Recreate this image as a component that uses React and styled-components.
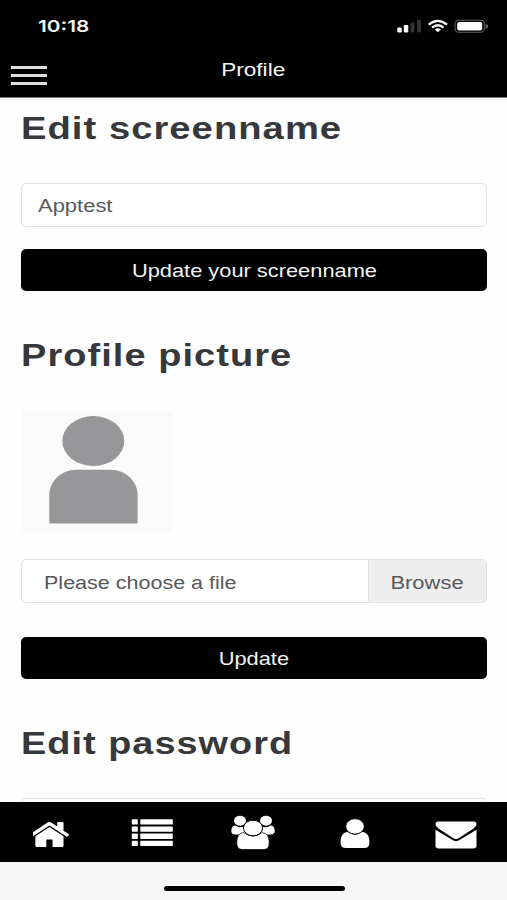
import React from "react";
import styled, { createGlobalStyle } from "styled-components";

const GlobalStyle = createGlobalStyle`
  * {
    box-sizing: border-box;
  }
  body {
    margin: 0;
    background: #fefefe;
    font-family: "Liberation Sans", Arial, sans-serif;
  }
`;

const Screen = styled.div`
  width: 507px;
  height: 900px;
  display: flex;
  flex-direction: column;
  overflow: hidden;
`;

/* wide lettering used all over the app */
const Wide = styled.span`
  display: inline-block;
  white-space: nowrap;
  transform: scaleX(${(props) => props.$x || 1.22});
  transform-origin: ${(props) => props.$origin || "left"} center;
`;

const Header = styled.header`
  height: 98px;
  flex: none;
  background: #000;
  color: #f4f4f4;
  border-bottom: 1px solid #777;
`;

const StatusBar = styled.div`
  height: 52px;
  padding: 0 19px 0 38px;
  display: flex;
  align-items: center;
  justify-content: space-between;
`;

const Time = styled.div`
  font-family: Inter, sans-serif;
  font-size: 16.5px;
  font-weight: 600;
`;

const StatusIcons = styled.svg`
  width: 91px;
  height: 16px;
`;

const TitleBar = styled.div`
  height: 36px;
  padding: 0 11px;
  display: grid;
  grid-template-columns: 36px 1fr 36px;
  align-items: center;
`;

const MenuButton = styled.button`
  height: 19px;
  padding: 0;
  margin-top: 11px;
  border: 0;
  background: none;
  display: flex;
  flex-direction: column;
  justify-content: space-between;
`;

const MenuLine = styled.span`
  width: 36px;
  height: 3px;
  background: #dedede;
`;

const Title = styled.div`
  font-size: 18.5px;
  line-height: 36px;
  text-align: center;
`;

const Content = styled.main`
  flex: 1;
  min-height: 0;
  padding: 10px 20px 0 21px;
  overflow: hidden;
`;

const Heading = styled.h2`
  height: 40px;
  margin: 0 0 35px;
  font-size: 31.3px;
  line-height: 42px;
  font-weight: bold;
  letter-spacing: 0.85px;
  color: #37383b;
`;

const Input = styled.div`
  height: 44px;
  padding-left: 16px;
  border: 1.5px solid #e2e2e2;
  border-radius: 5px;
  background: #fff;
  color: #58595b;
  font-size: 18px;
  line-height: 45px;
`;

const Button = styled.button`
  display: block;
  width: 100%;
  height: 42px;
  margin: ${(props) => props.$top}px 0 44px;
  padding: 0;
  border: 0;
  border-radius: 5px;
  background: #000;
  color: #f2f2f2;
  font-family: inherit;
  font-size: 17.9px;
  line-height: 44px;
`;

const Avatar = styled.svg`
  display: block;
  width: 150px;
  height: 121px;
  margin: 36px 0 27px 1px;
  background: #fafafa;
`;

const FileField = styled.div`
  height: 44px;
  display: flex;
  border: 1.5px solid #e2e2e2;
  border-radius: 5px;
  overflow: hidden;
  background: #fff;
  color: #58595b;
  font-size: 18px;
  line-height: 47px;
`;

const FileName = styled.div`
  flex: 1;
  padding-left: 21.6px;
`;

const Browse = styled.div`
  width: 118px;
  border-left: 1px solid #e2e2e2;
  background: #eee;
  text-align: center;
`;

const TabBar = styled.nav`
  flex: none;
  height: 60px;
  background: #000;
  display: grid;
  grid-template-columns: repeat(5, 1fr);
  align-items: center;
  justify-items: center;
`;

const TabIcon = styled.svg`
  display: block;
  fill: #fff;
  margin-top: ${(props) => props.$top || 0}px;
`;

const HomeArea = styled.footer`
  flex: none;
  height: 38px;
  padding: 24px 0 0 1px;
  background: #f7f7f7;
`;

const HomeIndicator = styled.div`
  width: 181px;
  height: 5px;
  margin: 0 auto;
  border-radius: 3px;
  background: #000;
`;

function Status() {
  return (
    <StatusIcons viewBox="397 18 91 16">
      <rect x="397.3" y="27.5" width="4.5" height="5" rx="1.2" fill="#fff" />
      <rect x="403.8" y="25" width="4.5" height="7.5" rx="1.2" fill="#fff" />
      <rect x="410.5" y="22.5" width="4" height="10" rx="1" fill="#333" />
      <rect x="417" y="20" width="4" height="12.5" rx="1" fill="#333" />
      <g fill="none" stroke="#fff" strokeWidth="2.2">
        <path d="M428.7 24.6Q437.8 17 447 24.6" />
        <path d="M432 27.7Q437.8 22.8 443.6 27.7" />
      </g>
      <path d="M434.7 29.4Q437.8 27.2 441 29.4L437.8 32.3Z" fill="#fff" />
      <rect x="455" y="20.3" width="29.3" height="12" rx="3.7" fill="none" stroke="#606060" strokeWidth="1.1" />
      <rect x="457.2" y="22.1" width="25" height="8.3" rx="2" fill="#fff" />
      <path d="M485.6 24Q488.2 24.4 488.2 26.3T485.6 28.6Z" fill="#606060" />
    </StatusIcons>
  );
}

function HomeIcon() {
  return (
    <TabIcon width="36" height="25" viewBox="160 250 1472 1286" preserveAspectRatio="none" $top={4}>
      <path d="M1408 992v480q0 26-19 45t-45 19h-384v-384h-256v384h-384q-26 0-45-19t-19-45v-480q0-1 .5-3t.5-3l575-474 575 474q1 2 1 6zm223-69l-62 74q-8 9-21 11h-3q-13 0-21-7l-692-577-692 577q-12 8-24 7-13-2-21-11l-62-74q-8-10-7-23.5t11-21.5l719-599q32-26 76-26t76 26l244 204v-195q0-14 9-23t23-9h192q14 0 23 9t9 23v408l219 182q10 8 11 21.5t-7 23.5z" />
    </TabIcon>
  );
}

function ListIcon() {
  return (
    <TabIcon width="42" height="28" viewBox="0 0 42 28" $top={1}>
      {[0.2, 7.4, 14.6, 21.8].map((y) => (
        <React.Fragment key={y}>
          <rect x="0.8" y={y} width="6" height="5.3" rx="0.7" />
          <rect x="9.3" y={y} width="32.5" height="5.3" rx="0.7" />
        </React.Fragment>
      ))}
    </TabIcon>
  );
}

function UsersIcon() {
  return (
    <TabIcon width="44" height="35" viewBox="0 0 44 35" $top={1}>
      <path d="M4.5 10.4Q8.8 13.6 13 11.5L15 19.4H4.3Q.3 19.4.3 16Q.3 10.4 4.5 10.4Z" />
      <path d="M39.5 10.4Q35.2 13.6 31 11.5L29 19.4H39.7Q43.7 19.4 43.7 16Q43.7 10.4 39.5 10.4Z" />
      <ellipse cx="9" cy="5.8" rx="6" ry="5" />
      <ellipse cx="35" cy="5.8" rx="6" ry="5" />
      <path
        d="M13 17.7Q22 24.5 31 17.7C36.5 17.7 38.2 22.5 38.2 28Q38.2 34.5 32.8 34.5H11.2Q5.8 34.5 5.8 28C5.8 22.5 7.5 17.7 13 17.7Z"
        stroke="#000"
        strokeWidth="0.7"
      />
      <ellipse cx="22" cy="13" rx="9.6" ry="7.8" stroke="#000" strokeWidth="1" />
    </TabIcon>
  );
}

function UserIcon() {
  return (
    <TabIcon width="30" height="31" viewBox="0 0 30 31" $top={3}>
      <path d="M8 13.9Q15 19.4 22 13.9C28 13.9 29.4 19 29.4 24.5Q29.4 30 24.3 30H5.7Q.6 30 .6 24.5C.6 19 2 13.9 8 13.9Z" />
      <ellipse cx="15" cy="8.4" rx="9.3" ry="7.7" stroke="#000" strokeWidth="0.8" />
    </TabIcon>
  );
}

function MailIcon() {
  return (
    <TabIcon width="42" height="28" viewBox="0 0 42 28" $top={5}>
      <path d="M3.5.5H38.5Q41.5.5 41.5 3.2Q41.5 5.6 38.5 7.4L24 17Q21 19 18 17L3.5 7.4Q.5 5.6.5 3.2Q.5.5 3.5.5Z" />
      <path d="M.5 8.8L18 19.2Q21 21.2 24 19.2L41.5 8.8V24.8Q41.5 27.5 38.3 27.5H3.7Q.5 27.5.5 24.8Z" />
    </TabIcon>
  );
}

export default function App() {
  return (
    <>
      <GlobalStyle />
      <Screen>
        <Header>
          <StatusBar>
            <Time>
              <Wide $x={1.26}>10:18</Wide>
            </Time>
            <Status />
          </StatusBar>
          <TitleBar>
            <MenuButton aria-label="Menu">
              <MenuLine />
              <MenuLine />
              <MenuLine />
            </MenuButton>
            <Title>
              <Wide $origin="center">Profile</Wide>
            </Title>
          </TitleBar>
        </Header>

        <Content>
          <Heading>
            <Wide>Edit screenname</Wide>
          </Heading>
          <Input>
            <Wide>Apptest</Wide>
          </Input>
          <Button $top={22}>
            <Wide $origin="center">Update your screenname</Wide>
          </Button>

          <Heading>
            <Wide $x={1.215}>Profile picture</Wide>
          </Heading>
          <Avatar viewBox="0 0 150 121">
            <ellipse cx="71.3" cy="30" rx="31" ry="25" fill="#97979a" />
            <path d="M27.3 112.5V84C27.3 70 40 58.8 54 58.8H89C103 58.8 115.6 70 115.6 84V112.5Z" fill="#97979a" />
          </Avatar>
          <FileField>
            <FileName>
              <Wide $x={1.195}>Please choose a file</Wide>
            </FileName>
            <Browse>
              <Wide $origin="center">Browse</Wide>
            </Browse>
          </FileField>
          <Button $top={34}>
            <Wide $origin="center">Update</Wide>
          </Button>

          <Heading>
            <Wide $x={1.21}>Edit password</Wide>
          </Heading>
          <Input />
        </Content>

        <TabBar>
          <HomeIcon />
          <ListIcon />
          <UsersIcon />
          <UserIcon />
          <MailIcon />
        </TabBar>
        <HomeArea>
          <HomeIndicator />
        </HomeArea>
      </Screen>
    </>
  );
}
